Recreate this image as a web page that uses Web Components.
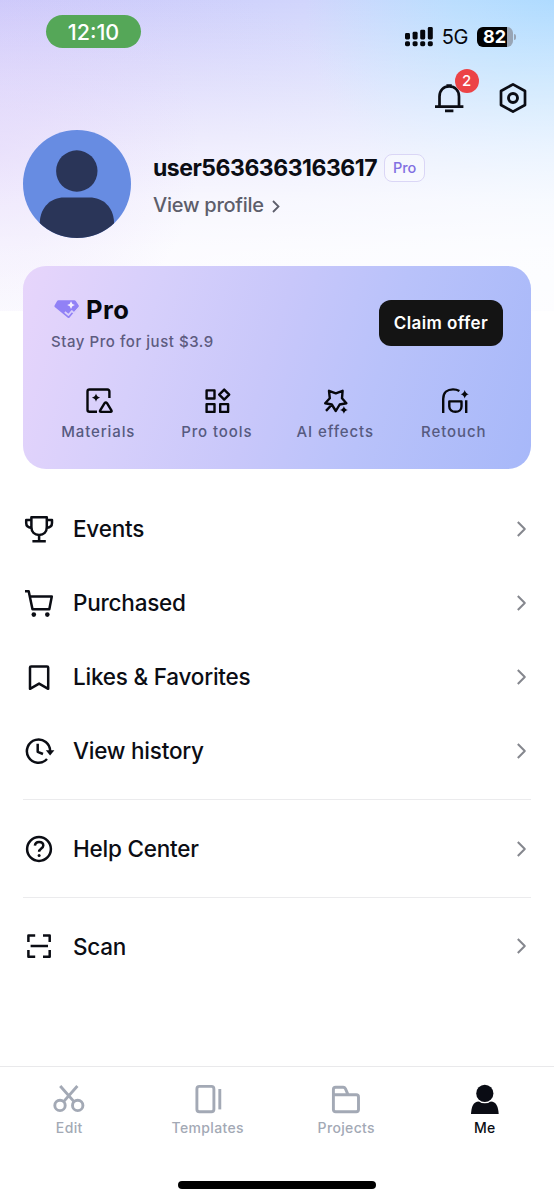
<!DOCTYPE html>
<html lang="en">
<head>
<meta charset="utf-8">
<meta name="viewport" content="width=device-width, initial-scale=1">
<title>Me</title>
<style>
    html, body {
        margin: 0;
        padding: 0;
    }
    body {
        font-family: Inter, "Liberation Sans", sans-serif;
        color: #0b0d14;
        background: #fff;
    }
</style>
</head>
<body>
<profile-page></profile-page>

<script>
// Inline icons, all on a 32x32 grid
const ICONS = {
    bell: `<path d="M6.5 24V14.5C6.5 8.3 10.5 4.4 16.2 4.4s9.8 3.9 9.8 10.1V24M2 24.7h28.4M12 28.9h8.4M13.4 3.7h5.4"/>`,
    settings: `<path d="M16 2.4 28 9v14L16 29.6 4 23V9z"/><circle cx="16" cy="16" r="4.5" stroke-width="2.9"/>`,
    trophy: `<path d="M8.4 4.2h15.4V14c0 5-3.2 7.9-7.7 7.9S8.4 19 8.4 14zM8.4 6.9H3.2v3.2c0 3 1.6 4.6 5.4 4.8M23.8 6.9H29v3.2c0 3-1.6 4.6-5.4 4.8M16.1 22v6M9.4 28.2h13.4"/>`,
    cart: `<path d="M2 4.2h3.7l1.1 5.2h22l-2.5 12.8H9.5L6.8 9.4"/><circle class="fill" cx="10.8" cy="27.6" r="2.3"/><circle class="fill" cx="24.3" cy="27.6" r="2.3"/>`,
    bookmark: `<path d="M7 27.8V6.6q0-1.2 1.2-1.2h15.8q1.2 0 1.2 1.2v21.2l-9.1-5.2z"/>`,
    history: `<path d="M27.1 16.5A11.6 11.6 0 1 0 24 24M14.7 8.8V16.8l5.3 2.2"/><path class="fill" d="M22.8 15.2h8.6l-4.3 5.4z"/>`,
    help: `<circle cx="16" cy="16" r="11.9"/><path d="M11.9 12.7c.2-2.3 1.8-3.7 4.2-3.7s4.2 1.4 4.2 3.5c0 3-4.2 3-4.2 6.3"/><circle class="fill" cx="16.1" cy="22.4" r="1.5"/>`,
    scan: `<path d="M5.4 12V5.4h6.8M20 5.4h6.7V12M26.7 20v6.7H20M12.2 26.7H5.4V20M7.6 16h17.4"/>`,
    materials: `<path d="M27.4 13V6.5q0-2-2-2H7.5q-2 0-2 2v18.2q0 2 2 2H15M22.6 18.2l-4.4 7.2q-.8 1.5.8 1.5h9.6q1.6 0 .8-1.5L25 18.2q-1.2-1.7-2.4 0z"/><path class="fill" d="M14 8.6q.7 3.4 4.1 4.1-3.4.7-4.1 4.1-.7-3.4-4.1-4.1 3.4-.7 4.1-4.1z"/>`,
    tools: `<path d="M5.6 5.4h7.9v8.1H5.6zM5.6 19.1h7.9v7.8H5.6zM19.2 19.1h7.9v7.8h-7.9zM23.2 4.6l5 5-5 5-5-5z"/>`,
    effects: `<path d="M10 5.8l6.8 2.5 6.8-2.5-.6 7.5 4.4 4.9-6.7 1.3L16.8 26l-4-6.5-6.6-1.3 4.6-4.9zM7 25.8l5.5-5.8"/><path class="fill" d="M24.9 21q.7 3.2 3.9 3.9-3.2.7-3.9 3.9-.7-3.2-3.9-3.9 3.2-.7 3.9-3.9z"/>`,
    retouch: `<path d="M5.2 27.9V14C5.2 7.5 9.6 4.4 15 4.4c2.4 0 4.5.5 6.4 1.6M11.3 16.4h12.2v5c0 3.3-2.6 5.4-6.1 5.4s-6.1-2.1-6.1-5.4zM28.2 15.2v12.7"/><path class="fill" d="M26.7 5q.8 3.4 4.1 4.2-3.3.8-4.1 4.2-.8-3.4-4.1-4.2 3.3-.8 4.1-4.2z"/>`,
    scissors: `<circle cx="7" cy="22.4" r="5.2"/><circle cx="24.7" cy="22.4" r="5.2"/><path d="M7.2 3 21 18.6M24.4 3 10.6 18.6"/>`,
    templates: `<rect x="4.9" y="3.4" width="17" height="25.4" rx="2.5"/><path d="M27.8 6v20.4"/>`,
    folder: `<path d="M3.4 27V6.5q0-2.2 2.2-2.2h7.6q1.5 0 2.2 1.4l2.6 5.9M3.4 11.7h22.9q2.2 0 2.2 2.2v12.6q0 2.2-2.2 2.2H5.6q-2.2 0-2.2-2.2"/>`,
    person: `<path class="fill" d="M2 31C2.4 23.5 4.4 18.6 9.8 18.4h12C27.2 18.6 29.2 23.5 29.7 31z"/><circle class="gap" cx="15.8" cy="10.4" r="9.9"/><circle class="fill" cx="15.8" cy="10.4" r="8.6"/>`,
    gem: `<path class="fill" d="M6.2 3.8h18.2q1 0 1.6.8l3.3 4.8q.6.8 0 1.7L19 23.4q-1.2 1.2-2.4 0L2 11.4q-.8-.9-.2-1.8L4.7 4.7q.5-.9 1.5-.9z"/><path class="cut" d="M13.5 17.2l4.2 3.4L21.5 16l2.5 2.5L30.5 11.8"/><path class="star" d="M20.6 4.8q.8 3.6 4.4 4.4-3.6.8-4.4 4.4-.8-3.6-4.4-4.4 3.6-.8 4.4-4.4z"/>`,
    chevron: `<path d="M12.8 9 19.8 16l-7 7"/>`,
};

class AppIcon extends HTMLElement {
    constructor() {
        super();
        this.attachShadow({ mode: 'open' });
    }

    connectedCallback() {
        const name = this.getAttribute('name');
        this.shadowRoot.innerHTML = `
            <style>
            :host {
                display: block;
                width: 32px;
                height: 32px;
                flex: none;
            }
            svg {
                display: block;
                width: 100%;
                height: 100%;
                overflow: visible;
                fill: none;
                stroke: currentColor;
                stroke-width: var(--icon-stroke, 2.5);
                stroke-linejoin: round;
            }
            .fill {
                fill: currentColor;
                stroke: none;
            }
            .gap {
                fill: #fff;
                stroke: none;
            }
            .cut {
                stroke: #d9cffa;
                stroke-width: 2;
            }
            .star {
                fill: #f4eeff;
                stroke: none;
            }
            </style>
            <svg viewBox="0 0 32 32" aria-hidden="true">${ICONS[name]}</svg>
        `;
    }
}

class StatusBar extends HTMLElement {
    constructor() {
        super();
        this.attachShadow({ mode: 'open' });
        this.shadowRoot.innerHTML = `
            <style>
            :host {
                display: flex;
                justify-content: space-between;
                align-items: flex-start;
                padding: 15px 41px 0 46px;
                height: 52px;
                box-sizing: border-box;
            }
            .time {
                width: 95px;
                height: 33px;
                line-height: 34px;
                border-radius: 17px;
                background: #55a758;
                color: #fff;
                font-size: 21.5px;
                font-weight: 500;
                text-align: center;
                letter-spacing: 0;
            }
            .right {
                display: flex;
                align-items: center;
                margin-top: 12px;
                height: 20px;
                color: #05070c;
            }
            .signal {
                width: 28px;
                height: 20px;
            }
            .network {
                width: 36px;
                text-align: center;
                font-size: 20px;
                line-height: 22px;
                letter-spacing: -0.2px;
                margin: 0 4px;
            }
            .battery {
                width: 36px;
                height: 20px;
                line-height: 20.5px;
                border-radius: 6px;
                background: linear-gradient(to right, #020203 30px, #98a5b5 30px);
                color: #fff;
                font-size: 18px;
                font-weight: 700;
                text-align: center;
                text-indent: -1px;
            }
            .nub {
                width: 2px;
                height: 6px;
                border-radius: 0 3px 3px 0;
                background: #98a5b5;
                margin: 0 -3px 0 1px;
            }
            </style>
            <div class="time">12:10</div>
            <div class="right">
                <svg class="signal" viewBox="0 0 28 20" fill="currentColor">
                    <rect x="0" y="6" width="5" height="6.4" rx="1.4"/>
                    <rect x="7.6" y="4.8" width="5" height="7.6" rx="1.4"/>
                    <rect x="15.2" y="2.7" width="5" height="9.7" rx="1.4"/>
                    <rect x="22.8" y="0" width="5" height="12.4" rx="1.4"/>
                    <rect x="0" y="14.2" width="5" height="5" rx="1.6"/>
                    <rect x="7.6" y="14.2" width="5" height="5" rx="1.6"/>
                    <rect x="15.2" y="14.2" width="5" height="5" rx="1.6"/>
                    <rect x="22.8" y="14.2" width="5" height="5" rx="1.6"/>
                </svg>
                <div class="network">5G</div>
                <div class="battery">82</div>
                <div class="nub"></div>
            </div>
        `;
    }
}

class TopActions extends HTMLElement {
    constructor() {
        super();
        this.attachShadow({ mode: 'open' });
        this.shadowRoot.innerHTML = `
            <style>
            :host {
                display: flex;
                justify-content: flex-end;
                gap: 32px;
                padding: 30px 25.5px 0 0;
                --icon-stroke: 2.7;
            }
            .bell {
                position: relative;
            }
            .badge {
                position: absolute;
                top: -13px;
                left: 22px;
                width: 24px;
                height: 24px;
                border-radius: 50%;
                background: #ec4346;
                color: #fff;
                font-size: 15px;
                font-weight: 500;
                line-height: 24px;
                text-align: center;
            }
            </style>
            <div class="bell">
                <app-icon name="bell"></app-icon>
                <span class="badge">2</span>
            </div>
            <app-icon name="settings"></app-icon>
        `;
    }
}

class UserHeader extends HTMLElement {
    constructor() {
        super();
        this.attachShadow({ mode: 'open' });
        this.shadowRoot.innerHTML = `
            <style>
            :host {
                display: flex;
                gap: 22px;
                padding: 16.4px 23px 0;
            }
            .avatar {
                display: block;
                width: 108px;
                height: 108px;
                border-radius: 50%;
                flex: none;
            }
            .info {
                padding-top: 24px;
            }
            .name-row {
                display: flex;
                align-items: center;
                gap: 7px;
                height: 27px;
            }
            .name {
                font-size: 23px;
                font-weight: 700;
                letter-spacing: -0.48px;
                white-space: nowrap;
            }
            .tag {
                box-sizing: border-box;
                width: 41px;
                height: 28px;
                border: 1.5px solid #dad6f6;
                border-radius: 8px;
                color: #8270e2;
                background: rgba(255, 255, 255, 0.4);
                font-size: 14.5px;
                font-weight: 500;
                line-height: 26px;
                text-align: center;
            }
            .link {
                display: flex;
                align-items: center;
                height: 24px;
                margin-top: 11.5px;
                color: #5d5e6b;
                font-size: 20px;
                font-weight: 500;
                letter-spacing: -0.25px;
                white-space: nowrap;
            }
            .link svg {
                margin-left: 8px;
                margin-top: 3px;
            }
            </style>
            <svg class="avatar" viewBox="0 0 108 108">
                <rect width="108" height="108" fill="#678ce2"/>
                <circle cx="53.8" cy="41" r="20.7" fill="#2a3558"/>
                <path fill="#2a3558" d="M16.8 108V92C17.5 77 28 67.5 41 67.5h25.5C80 67.5 90.5 77 91 92v16z"/>
            </svg>
            <div class="info">
                <div class="name-row">
                    <span class="name"><slot name="name"></slot></span>
                    <span class="tag">Pro</span>
                </div>
                <div class="link">
                    <slot></slot>
                    <svg width="8" height="13" viewBox="0 0 8 13" fill="none" stroke="currentColor" stroke-width="1.8"><path d="M1 1l5.5 5.5L1 12"/></svg>
                </div>
            </div>
        `;
    }
}

class ProFeature extends HTMLElement {
    constructor() {
        super();
        this.attachShadow({ mode: 'open' });
    }

    connectedCallback() {
        this.shadowRoot.innerHTML = `
            <style>
            :host {
                display: flex;
                flex: 1;
                flex-direction: column;
                align-items: center;
                gap: 5px;
                color: #06070b;
                --icon-stroke: 2.4;
            }
            .label {
                color: #565a80;
                font-size: 15px;
                font-weight: 500;
                line-height: 20px;
                letter-spacing: 0.9px;
                white-space: nowrap;
            }
            </style>
            <app-icon name="${this.getAttribute('icon')}"></app-icon>
            <span class="label"><slot></slot></span>
        `;
    }
}

class ProCard extends HTMLElement {
    constructor() {
        super();
        this.attachShadow({ mode: 'open' });
        this.shadowRoot.innerHTML = `
            <style>
            :host {
                display: block;
                box-sizing: border-box;
                height: 203px;
                margin: 27.6px 23px 0;
                padding: 28px 18px 0 16px;
                border-radius: 23px;
                background: linear-gradient(107deg, #e7d5fb 0%, #d6cffb 25%, #c8c7fa 48%, #b9c2fa 68%, #a7b8f9 100%);
            }
            .top {
                display: flex;
                justify-content: space-between;
                padding: 0 10px 0 12px;
            }
            .title {
                display: flex;
                align-items: center;
                gap: 5px;
                height: 31px;
                font-size: 25.5px;
                font-weight: 700;
                letter-spacing: 0.5px;
                color: #07080d;
            }
            .title app-icon {
                width: 28px;
                height: 28px;
                margin-left: 2px;
                margin-top: 3px;
                color: #9181f6;
            }
            .sub {
                margin-top: 7px;
                color: #5d5b80;
                font-size: 15px;
                font-weight: 500;
                line-height: 20px;
                letter-spacing: 0.55px;
                white-space: nowrap;
            }
            button {
                width: 124px;
                height: 46px;
                margin: 6px 0 0;
                padding: 0;
                border: 0;
                border-radius: 12px;
                background: #141414;
                color: #fff;
                font: 600 17px/46px Inter, sans-serif;
                letter-spacing: 0.4px;
            }
            .features {
                display: flex;
                margin-top: 33.5px;
            }
            </style>
            <div class="top">
                <div>
                    <div class="title"><app-icon name="gem"></app-icon><span>Pro</span></div>
                    <div class="sub">Stay Pro for just $3.9</div>
                </div>
                <button>Claim offer</button>
            </div>
            <div class="features"><slot></slot></div>
        `;
    }
}

class MenuItem extends HTMLElement {
    constructor() {
        super();
        this.attachShadow({ mode: 'open' });
    }

    connectedCallback() {
        this.shadowRoot.innerHTML = `
            <style>
            :host {
                display: flex;
                align-items: center;
                height: 74px;
            }
            .label {
                flex: 1;
                margin-left: 18px;
                font-size: 22.5px;
                font-weight: 500;
                letter-spacing: -0.22px;
            }
            .arrow {
                margin-right: -6px;
                color: #85878e;
                --icon-stroke: 2;
            }
            </style>
            <app-icon name="${this.getAttribute('icon')}"></app-icon>
            <span class="label"><slot></slot></span>
            <app-icon class="arrow" name="chevron"></app-icon>
        `;
    }
}

class MenuList extends HTMLElement {
    constructor() {
        super();
        this.attachShadow({ mode: 'open' });
        this.shadowRoot.innerHTML = `
            <style>
            :host {
                display: block;
                padding: 23px 23px 0;
            }
            ::slotted(hr) {
                height: 1px;
                margin: 11px 0 11.6px;
                border: 0;
                background: #ebebed;
            }
            </style>
            <slot></slot>
        `;
    }
}

class TabItem extends HTMLElement {
    constructor() {
        super();
        this.attachShadow({ mode: 'open' });
    }

    connectedCallback() {
        this.shadowRoot.innerHTML = `
            <style>
            :host {
                display: flex;
                flex: 1;
                flex-direction: column;
                align-items: center;
                gap: 3px;
                color: #a3a9b5;
                --icon-stroke: 2.9;
            }
            :host([active]) {
                color: #0a0c14;
            }
            .label {
                font-size: 14px;
                font-weight: 500;
                line-height: 20px;
                letter-spacing: 0.35px;
            }
            </style>
            <app-icon name="${this.getAttribute('icon')}"></app-icon>
            <span class="label"><slot></slot></span>
        `;
    }
}

class TabBar extends HTMLElement {
    constructor() {
        super();
        this.attachShadow({ mode: 'open' });
        this.shadowRoot.innerHTML = `
            <style>
            :host {
                display: flex;
                flex-direction: column;
                align-items: center;
                justify-content: space-between;
                box-sizing: border-box;
                height: 134px;
                margin-top: auto;
                padding: 16px 0 11px;
                border-top: 1.5px solid #e9e9eb;
            }
            .tabs {
                display: flex;
                width: 100%;
            }
            .home {
                width: 198px;
                height: 8px;
                border-radius: 4px;
                background: #000;
            }
            </style>
            <div class="tabs"><slot></slot></div>
            <div class="home"></div>
        `;
    }
}

class ProfilePage extends HTMLElement {
    constructor() {
        super();
        this.attachShadow({ mode: 'open' });
        this.shadowRoot.innerHTML = `
            <style>
            :host {
                display: flex;
                flex-direction: column;
                width: 554px;
                height: 1200px;
                overflow: hidden;
                background:
                    radial-gradient(ellipse 200px 200px at 0 150px, rgba(223,208,250,0.4) 0%, rgba(223,208,250,0) 100%) 0 0 / 100% 311px no-repeat,
                    linear-gradient(to bottom, rgba(255,255,255,0) 0, rgba(255,255,255,0.43) 100px, rgba(255,255,255,0.65) 150px, rgba(255,255,255,0.83) 200px, rgba(255,255,255,0.92) 250px, rgba(255,255,255,0.95) 310px) 0 0 / 100% 311px no-repeat,
                    radial-gradient(ellipse 250px 230px at 100% 0, #afdbff 0%, rgba(176,222,255,0.7) 40%, rgba(200,228,255,0) 100%) 0 0 / 100% 311px no-repeat,
                    radial-gradient(ellipse 420px 210px at 0 170px, rgba(223,203,248,0.6) 0%, rgba(223,203,248,0) 100%) 0 0 / 100% 311px no-repeat,
                    linear-gradient(to right, #cac9fb 0, #d1d5fc 55%, #d5e1fd 100%) 0 0 / 100% 311px no-repeat,
                    #fff;
            }
            </style>
            <status-bar></status-bar>
            <top-actions></top-actions>
            <user-header>
                <span slot="name">user5636363163617</span>
                View profile
            </user-header>
            <pro-card>
                <pro-feature icon="materials">Materials</pro-feature>
                <pro-feature icon="tools">Pro tools</pro-feature>
                <pro-feature icon="effects">AI effects</pro-feature>
                <pro-feature icon="retouch">Retouch</pro-feature>
            </pro-card>
            <menu-list>
                <menu-item icon="trophy">Events</menu-item>
                <menu-item icon="cart">Purchased</menu-item>
                <menu-item icon="bookmark">Likes &amp; Favorites</menu-item>
                <menu-item icon="history">View history</menu-item>
                <hr>
                <menu-item icon="help">Help Center</menu-item>
                <hr>
                <menu-item icon="scan">Scan</menu-item>
            </menu-list>
            <tab-bar>
                <tab-item icon="scissors">Edit</tab-item>
                <tab-item icon="templates">Templates</tab-item>
                <tab-item icon="folder">Projects</tab-item>
                <tab-item icon="person" active>Me</tab-item>
            </tab-bar>
        `;
    }
}

customElements.define('app-icon', AppIcon);
customElements.define('status-bar', StatusBar);
customElements.define('top-actions', TopActions);
customElements.define('user-header', UserHeader);
customElements.define('pro-feature', ProFeature);
customElements.define('pro-card', ProCard);
customElements.define('menu-item', MenuItem);
customElements.define('menu-list', MenuList);
customElements.define('tab-item', TabItem);
customElements.define('tab-bar', TabBar);
customElements.define('profile-page', ProfilePage);
</script>
</body>
</html>
